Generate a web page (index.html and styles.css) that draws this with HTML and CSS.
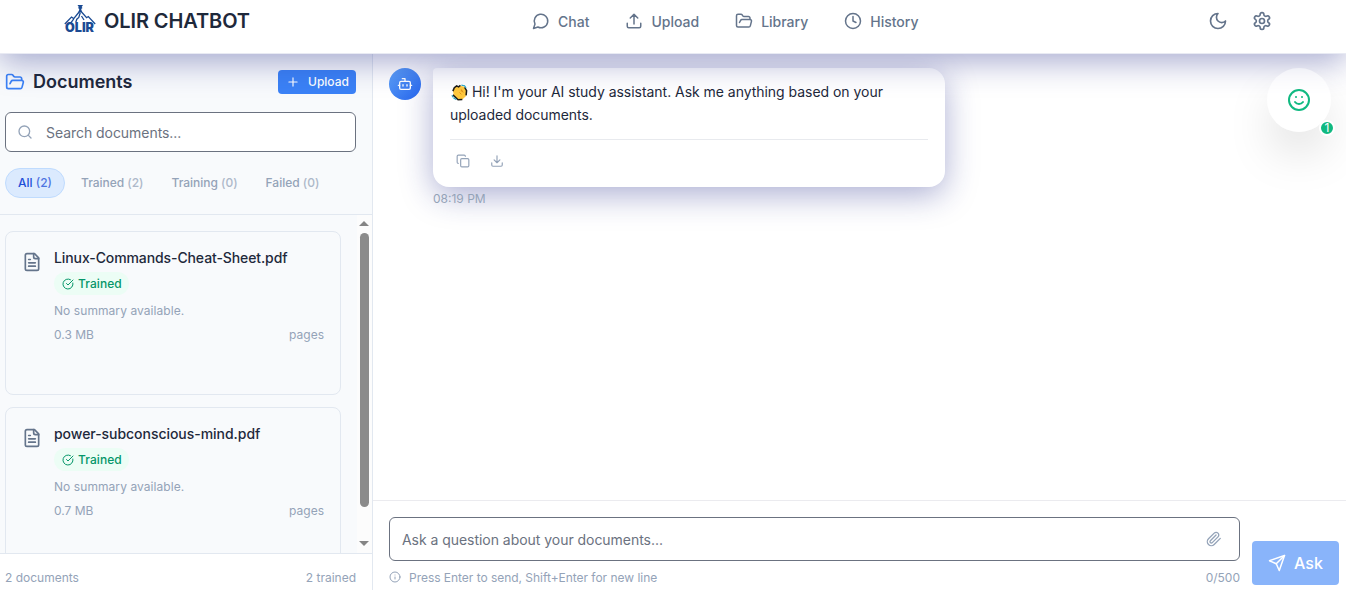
FILE: index.html
```html
<!DOCTYPE html>
<html lang="en">
<head>
<meta charset="utf-8">
<title>OLIR CHATBOT</title>
<link rel="stylesheet" href="styles.css">
</head>
<body>
<svg class="sprite" aria-hidden="true">
  <symbol id="folder" viewBox="0 0 24 24"><path d="m6 14 1.5-2.9A2 2 0 0 1 9.24 10H20a2 2 0 0 1 1.94 2.5l-1.54 6a2 2 0 0 1-1.95 1.5H4a2 2 0 0 1-2-2V5a2 2 0 0 1 2-2h3.9a2 2 0 0 1 1.69.9l.81 1.2a2 2 0 0 0 1.67.9H18a2 2 0 0 1 2 2v2"/></symbol>
  <symbol id="file" viewBox="0 0 24 24"><path d="M15 2H6a2 2 0 0 0-2 2v16a2 2 0 0 0 2 2h12a2 2 0 0 0 2-2V7Z"/><path d="M14 2v4a2 2 0 0 0 2 2h4M10 9H8M16 13H8M16 17H8"/></symbol>
  <symbol id="check" viewBox="0 0 24 24"><path d="M21.801 10A10 10 0 1 1 17 3.335"/><path d="m9 11 3 3L22 4"/></symbol>
</svg>
<div class="app">
  <header class="header">
    <div class="brand">
      <svg class="logo" viewBox="0 0 32 32">
        <path d="M.8 20 7.500 13l2.200 1.600L15.500 7.500h1.600l5.500 6.200 1.700-1.200L31.200 20M9.800 14.800l-3 4M16.300 8.500l-1.500 5-2 1.700-1 3M17.500 12l2.500 4" fill="none" stroke="#1b4b93" stroke-width="1.300"/>
        <path d="M13.500 1H19l-1.300 2 .8 1-1.300 1 .8 3h-3.500l.8-3-1.300-1 .8-1z" fill="#1b4b93"/>
        <text class="logo-text" x="1" y="27.500" textLength="29" lengthAdjust="spacingAndGlyphs">OLIR</text>
      </svg>
      <h1 class="brand-name">OLIR CHATBOT</h1>
    </div>
    <nav class="nav">
      <a class="nav-item"><svg class="icon i18" viewBox="0 0 24 24"><path d="M7.900 20A9 9 0 1 0 4 16.100L2 22Z"/></svg><span>Chat</span></a>
      <a class="nav-item"><svg class="icon i18" viewBox="0 0 24 24"><path d="M12 3v13M17 8l-5-5-5 5M21 15v4a2 2 0 0 1-2 2H5a2 2 0 0 1-2-2v-4"/></svg><span>Upload</span></a>
      <a class="nav-item"><svg class="icon i18"><use href="#folder"/></svg><span>Library</span></a>
      <a class="nav-item"><svg class="icon i18" viewBox="0 0 24 24"><circle cx="12" cy="12" r="10"/><path d="M12 6v6l4 2"/></svg><span>History</span></a>
    </nav>
    <div class="tools">
      <svg class="icon i20" viewBox="0 0 24 24"><path d="M12 3a6 6 0 0 0 9 9 9 9 0 1 1-9-9Z"/></svg>
      <svg class="icon i20" viewBox="0 0 24 24"><path d="M12.220 2h-.44a2 2 0 0 0-2 2v.18a2 2 0 0 1-1 1.730l-.43.25a2 2 0 0 1-2 0l-.15-.08a2 2 0 0 0-2.730.73l-.22.38a2 2 0 0 0 .73 2.730l.15.1a2 2 0 0 1 1 1.720v.51a2 2 0 0 1-1 1.740l-.15.09a2 2 0 0 0-.73 2.730l.22.38a2 2 0 0 0 2.730.73l.15-.08a2 2 0 0 1 2 0l.43.25a2 2 0 0 1 1 1.730V20a2 2 0 0 0 2 2h.44a2 2 0 0 0 2-2v-.18a2 2 0 0 1 1-1.730l.43-.25a2 2 0 0 1 2 0l.15.08a2 2 0 0 0 2.730-.73l.22-.39a2 2 0 0 0-.73-2.730l-.15-.08a2 2 0 0 1-1-1.740v-.5a2 2 0 0 1 1-1.740l.15-.09a2 2 0 0 0 .73-2.730l-.22-.38a2 2 0 0 0-2.730-.73l-.15.08a2 2 0 0 1-2 0l-.43-.25a2 2 0 0 1-1-1.730V4a2 2 0 0 0-2-2z"/><circle cx="12" cy="12" r="3"/></svg>
    </div>
  </header>

  <div class="body">
    <aside class="sidebar">
      <div class="side-top">
        <div class="side-title">
          <svg class="icon i20 blue"><use href="#folder"/></svg>
          <h2 class="side-heading">Documents</h2>
          <button class="upload"><svg class="icon i14" viewBox="0 0 24 24"><path d="M5 12h14M12 5v14"/></svg><span>Upload</span></button>
        </div>
        <div class="search"><svg class="icon i16" viewBox="0 0 24 24"><circle cx="11" cy="11" r="8"/><path d="m21 21-4.300-4.300"/></svg><span class="search-text">Search documents...</span></div>
        <div class="filters">
          <span class="chip active">All <span class="count">(2)</span></span>
          <span class="chip">Trained <span class="count">(2)</span></span>
          <span class="chip">Training <span class="count">(0)</span></span>
          <span class="chip">Failed <span class="count">(0)</span></span>
        </div>
      </div>
      <div class="list-wrap">
        <div class="list">
          <article class="card">
            <svg class="icon i20 file"><use href="#file"/></svg>
            <div class="card-main">
              <h3 class="card-title t1">Linux-Commands-Cheat-Sheet.pdf</h3>
              <span class="badge"><svg class="icon i12"><use href="#check"/></svg>Trained</span>
              <p class="summary">No summary available.</p>
              <div class="meta"><span>0.3 MB</span><span>pages</span></div>
            </div>
          </article>
          <article class="card">
            <svg class="icon i20 file"><use href="#file"/></svg>
            <div class="card-main">
              <h3 class="card-title t2">power-subconscious-mind.pdf</h3>
              <span class="badge"><svg class="icon i12"><use href="#check"/></svg>Trained</span>
              <p class="summary">No summary available.</p>
              <div class="meta"><span>0.7 MB</span><span>pages</span></div>
            </div>
          </article>
        </div>
        <div class="scrollbar"><i class="arrow up"></i><i class="thumb"></i><i class="arrow down"></i></div>
      </div>
      <footer class="side-foot"><span>2 documents</span><span>2 trained</span></footer>
    </aside>

    <main class="chat">
      <section class="messages">
        <div class="avatar"><svg class="icon i16" viewBox="0 0 24 24"><path d="M12 8V4H8M2 14h2M20 14h2M15 13v2M9 13v2"/><rect x="4" y="8" width="16" height="12" rx="2"/></svg></div>
        <div class="msg-col">
          <div class="bubble">
            <p class="msg"><svg class="wave" viewBox="0 0 18 18"><path d="M3 4.500 5 2.500l2 .5 2-1.500 5 1.500 2.500 4-.8 6-3.700 3.500-4 .2-5-4.700-1-5z" fill="#ffc83d"/><path d="M2 7.500 3.500 4 6 2l2 1 2-1.500M2 11.500l5.500 5.200 4.500-.2M14.500 3.500l2 3.500-.5 5" fill="none" stroke="#1c1b18" stroke-width="1.600"/><path d="m9 9 2 2M11 8v-2l2 3" fill="none" stroke="#e08f18" stroke-width="1"/><path d="m11 1.200 3 .6M14 1.500 16 4M1 12l1 2M2.500 14.500l3 2" stroke="#2aa7c7" stroke-width="1.200"/></svg><span class="line1">Hi! I'm your AI study assistant. Ask me anything based on your</span><br><span class="line2">uploaded documents.</span></p>
            <div class="actions">
              <svg class="icon i14" viewBox="0 0 24 24"><rect x="8" y="8" width="14" height="14" rx="2"/><path d="M4 16c-1.100 0-2-.9-2-2V4c0-1.100.9-2 2-2h10c1.100 0 2 .9 2 2"/></svg>
              <svg class="icon i14" viewBox="0 0 24 24"><path d="M12 3v12M7 10l5 5 5-5M21 15v4a2 2 0 0 1-2 2H5a2 2 0 0 1-2-2v-4"/></svg>
            </div>
          </div>
          <time class="time">08:19 PM</time>
        </div>
      </section>
      <section class="composer">
        <div class="entry">
          <div class="input"><span class="input-text">Ask a question about your documents...</span><svg class="icon i16" viewBox="0 0 24 24"><path d="m21.440 11.050-9.190 9.190a6 6 0 0 1-8.490-8.490l8.570-8.570A4 4 0 1 1 18 8.840l-8.590 8.570a2 2 0 0 1-2.830-2.830l8.490-8.480"/></svg></div>
          <div class="hints"><svg class="icon i12" viewBox="0 0 24 24"><circle cx="12" cy="12" r="10"/><path d="M12 16v-4M12 8h.01"/></svg><span class="hint">Press Enter to send, Shift+Enter for new line</span><span class="counter">0/500</span></div>
        </div>
        <button class="ask"><svg class="icon i18" viewBox="0 0 24 24"><path d="m22 2-7 20-4-9-9-4Z"/><path d="M22 2 11 13"/></svg><span>Ask</span></button>
      </section>
    </main>
  </div>
  <div class="fab"><svg class="icon i24" viewBox="0 0 24 24"><circle cx="12" cy="12" r="10"/><path d="M8 14s1.500 2 4 2 4-2 4-2M9 9h.01M15 9h.01"/></svg><span class="fab-badge">1</span></div>
</div>
</body>
</html>
```

FILE: styles.css
```css
* { box-sizing: border-box; margin: 0; padding: 0; }
body { font-family: Inter, "Liberation Sans", sans-serif; color: #1e293b; background: #fff; overflow: hidden; }
button { font: inherit; border: 0; }
.sprite { display: none; }
.icon { flex: none; display: block; fill: none; stroke: currentColor; stroke-width: 2; stroke-linecap: round; stroke-linejoin: round; }
.i12 { width: 12px; height: 12px; }
.i14 { width: 14px; height: 14px; }
.i16 { width: 16px; height: 16px; }
.i18 { width: 18px; height: 18px; }
.i20 { width: 20px; height: 20px; }
.i24 { width: 24px; height: 24px; }
.app { position: relative; height: 590px; display: flex; flex-direction: column; }

.header { position: relative; z-index: 5; height: 54px; flex: none; display: grid; grid-template-columns: 532px 1fr auto; align-items: start; background: #fff; border-bottom: 1px solid #e8eaf3; box-shadow: 0 8px 32px rgba(31, 38, 135, .39); color: #64748b; }
.brand { display: flex; gap: 8px; padding: 4px 0 0 64px; }
.logo { width: 32px; height: 32px; flex: none; }
.logo-text { font: 900 12.5px Inter, sans-serif; fill: #1b4b93; }
.brand-name { font-size: 20px; line-height: 28px; margin-top: 3px; font-weight: 600; letter-spacing: -.1px; color: #1e293b; white-space: nowrap; }
.nav { display: flex; gap: 36px; padding-top: 11px; }
.nav-item { display: flex; gap: 8px; font-size: 14px; font-weight: 500; line-height: 20px; align-items: flex-start; }
.nav-item span { padding-top: 1px; }
.nav-item .icon { margin-top: 1px; }
.tools { display: flex; gap: 24px; padding: 11px 74px 0 0; }

.body { flex: 1; min-height: 0; display: grid; grid-template-columns: 373px 1fr; }
.sidebar { display: flex; flex-direction: column; min-height: 0; background: #f8fafc; border-right: 1px solid #e2e8f0; }
.side-top { height: 161px; flex: none; padding: 14px 16px 0 5px; border-bottom: 1px solid #e2e8f0; }
.side-title { display: flex; align-items: center; height: 28px; }
.blue { color: #3b82f6; }
.side-heading { flex: 1; margin-left: 8px; font-size: 18px; font-weight: 600; line-height: 28px; }
.upload { display: flex; align-items: center; gap: 8px; width: 78px; height: 24px; padding: 0 8px 1px; border-radius: 4px; background: #3b82f6; color: #fff; font-size: 12px; font-weight: 500; }
.search { display: flex; align-items: center; gap: 13px; height: 40px; margin-top: 16px; padding: 0 11px; border: 1px solid #6b7280; border-radius: 6px; background: #fff; color: #94a3b8; }
.search-text { color: #6b7280; font-size: 14px; letter-spacing: -.05px; }
.filters { display: flex; gap: 4px; margin-top: 16px; }
.chip { height: 30px; padding: 0 12px; border-radius: 15px; font-size: 12px; line-height: 30px; font-weight: 500; letter-spacing: -.02px; color: #94a3b8; white-space: nowrap; }
.chip.active { background: #dbeafe; border: 1px solid #bfdbfe; line-height: 28px; letter-spacing: 0; color: #1d4ed8; }
.count { opacity: .75; }
.list-wrap { flex: 1; min-height: 0; display: flex; }
.list { flex: 1; display: flex; flex-direction: column; gap: 12px; padding: 16px 16px 0 5px; overflow: hidden; }
.card { flex: none; height: 164px; display: flex; gap: 12px; padding: 16px; border: 1px solid #e2e8f0; border-radius: 8px; }
.file { color: #64748b; margin-top: 4px; }
.card-main { flex: 1; display: flex; flex-direction: column; align-items: flex-start; }
.card-title { font-size: 14px; line-height: 20px; font-weight: 500; white-space: nowrap; }
.t1 { letter-spacing: -.1px; }
.t2 { letter-spacing: -.04px; }
.badge { display: flex; align-items: center; gap: 4px; height: 23px; margin-top: 4px; padding: 0 7px 0 8px; border-radius: 12px; background: #ecfdf5; color: #059669; font-size: 12px; font-weight: 500; letter-spacing: .08px; }
.summary { height: 24px; margin-top: 8px; font-size: 12px; line-height: 16px; letter-spacing: .07px; color: #94a3b8; }
.meta { display: flex; justify-content: space-between; width: 100%; font-size: 12px; line-height: 16px; color: #94a3b8; }
.scrollbar { width: 15px; flex: none; display: flex; flex-direction: column; align-items: center; background: #fcfcfc; padding: 6px 1px 7px 0; }
.arrow { border: 5px solid transparent; border-top-width: 0; border-bottom-width: 0; }
.arrow.up { border-bottom: 5px solid #858585; }
.arrow.down { border-top: 5px solid #858585; margin-top: auto; }
.thumb { width: 9px; height: 274px; margin-top: 7px; border-radius: 5px; background: #8b8b8b; }
.side-foot { height: 37px; flex: none; display: flex; justify-content: space-between; padding: 16px 16px 0 5px; border-top: 1px solid #e2e8f0; background: #fff; font-size: 12px; line-height: 16px; color: #94a3b8; }

.chat { display: flex; flex-direction: column; min-width: 0; min-height: 0; }
.messages { flex: 1; display: flex; align-items: flex-start; gap: 12px; padding: 14px 16px 0; overflow: hidden; }
.avatar { position: relative; z-index: 1; width: 32px; height: 32px; flex: none; display: grid; place-items: center; border-radius: 50%; color: #fff; background: linear-gradient(135deg, #60a5fa, #2563eb); }
.bubble { width: 512px; height: 119px; padding: 12px 17px 0; border-radius: 4px 16px 16px; background: #fff; box-shadow: 0 8px 32px rgba(31, 38, 135, .37); }
.msg { height: 60px; font-size: 14px; line-height: 23px; white-space: nowrap; border-bottom: 1px solid #e8eaee; }
.line1 { letter-spacing: -.035px; }
.line2 { letter-spacing: -.05px; }
.wave { width: 17px; height: 17px; margin: 0 4px 0 1px; vertical-align: -4px; }
.actions { display: flex; gap: 20px; padding: 14px 6px 0; color: #94a3b8; }
.time { position: relative; display: block; margin-top: 4px; font-size: 12px; line-height: 16px; color: #94a3b8; }
.composer { height: 90px; flex: none; display: flex; gap: 12px; padding: 16px 7px 0 16px; border-top: 1px solid #ebebef; }
.entry { flex: 1; min-width: 0; }
.input { height: 44px; display: flex; align-items: center; justify-content: space-between; padding: 0 17px 0 12px; border: 1px solid #6b7280; border-radius: 6px; color: #94a3b8; }
.input-text { color: #6b7280; font-size: 14px; letter-spacing: -.04px; }
.hints { display: flex; align-items: center; height: 16px; margin-top: 8px; font-size: 12px; color: #94a3b8; }
.hint { margin-left: 8px; letter-spacing: -.03px; }
.counter { margin-left: auto; }
.ask { display: flex; align-items: center; gap: 8px; width: 87px; height: 44px; margin-top: 24px; padding: 0 16px; border-radius: 4px; background: #89b4fa; color: #fff; font-size: 16px; font-weight: 500; }

/* Floating assistant button */
.fab { position: absolute; z-index: 6; top: 68px; left: 1267px; width: 64px; height: 64px; display: grid; place-items: center; border-radius: 50%; background: rgba(255, 255, 255, .5); color: #10b981; box-shadow: 0 25px 50px -12px rgba(0, 0, 0, .25); }
.fab-badge { position: absolute; right: -4px; bottom: -4px; width: 16px; height: 16px; border: 2px solid #fff; border-radius: 50%; background: #10b981; color: #fff; font-size: 12px; line-height: 12px; text-align: center; }
```
